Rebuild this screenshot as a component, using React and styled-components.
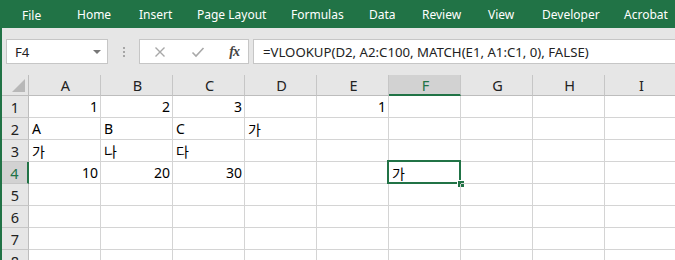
import React from 'react'
import styled, { createGlobalStyle } from 'styled-components'

const GlobalStyle = createGlobalStyle`
  html, body {
    margin: 0;
    padding: 0;
    background: #ffffff;
    overflow: hidden;
  }
`

const font = `"Noto Sans", "Noto Sans CJK KR", sans-serif`
const green = '#217346'

const Window = styled.div`
  width: 675px;
  height: 260px;
  border-left: 2px solid ${green};
  box-sizing: border-box;
  font-family: ${font};
  overflow: hidden;
  display: flex;
  flex-direction: column;
`

const Ribbon = styled.div`
  height: 28px;
  margin-left: -2px;
  background: ${green};
  display: flex;
  align-items: center;
  padding-left: 22px;
  flex-shrink: 0;
  overflow: hidden;
`

const Tab = styled.div`
  color: #ffffff;
  font-size: 12px;
  width: ${(p) => p.$w}px;
  flex-shrink: 0;
  white-space: nowrap;
  padding-top: ${(p) => (p.$file ? 3 : 0)}px;
`

const FormulaBar = styled.div`
  height: 47px;
  background: #e6e6e6;
  display: flex;
  align-items: center;
  padding: 0 0 0 4px;
  flex-shrink: 0;
`

const Box = styled.div`
  height: 25px;
  box-sizing: border-box;
  background: #ffffff;
  border: 1px solid #c6c6c6;
  display: flex;
  align-items: center;
  font-size: 13.2px;
  color: #222;
`

const NameBox = styled(Box)`
  width: 102px;
  padding: 0 6px 0 8px;
  justify-content: space-between;
`

const Caret = styled.span`
  width: 0;
  height: 0;
  border-left: 4px solid transparent;
  border-right: 4px solid transparent;
  border-top: 4px solid #777;
`

const Dots = styled.div`
  width: 31px;
  display: flex;
  flex-direction: column;
  align-items: center;
  gap: 2px;
  span {
    width: 2px;
    height: 2px;
    background: #a6a6a6;
  }
`

const FnBox = styled(Box)`
  width: 110px;
  padding: 0 9px 0 14px;
  justify-content: space-between;
`

const Fx = styled.span`
  font-family: "Liberation Serif", serif;
  font-style: italic;
  font-weight: bold;
  font-size: 14px;
  color: #444;
  letter-spacing: -1px;
`

const FormulaInput = styled(Box)`
  flex: 1;
  margin-left: 4px;
  border-right: none;
  padding-left: 9px;
  white-space: nowrap;
`

const Grid = styled.div`
  display: grid;
  grid-template-columns: 27px repeat(9, 72px);
  grid-template-rows: 21px repeat(8, 22px);
`

const Corner = styled.div`
  background: #e6e6e6;
  border-right: 1px solid #bdbdbd;
  border-bottom: 1px solid #bdbdbd;
  box-sizing: border-box;
  position: relative;
  &::after {
    content: '';
    position: absolute;
    right: 3px;
    bottom: 3px;
    width: 0;
    height: 0;
    border-left: 13px solid transparent;
    border-bottom: 13px solid #b8b8b8;
  }
`

const ColHead = styled.div`
  background: ${(p) => (p.$active ? '#d2d2d2' : '#e6e6e6')};
  color: ${(p) => (p.$active ? green : '#222')};
  border-right: 1px solid #c6c6c6;
  border-bottom: ${(p) => (p.$active ? `2px solid ${green}` : '1px solid #bdbdbd')};
  box-sizing: border-box;
  display: flex;
  align-items: center;
  justify-content: center;
  padding-left: 2px;
  font-size: 14.5px;
`

const RowHead = styled.div`
  background: ${(p) => (p.$active ? '#d2d2d2' : '#e6e6e6')};
  color: ${(p) => (p.$active ? green : '#222')};
  border-right: ${(p) => (p.$active ? `2px solid ${green}` : '1px solid #bdbdbd')};
  border-bottom: 1px solid #c6c6c6;
  box-sizing: border-box;
  display: flex;
  align-items: center;
  justify-content: center;
  font-size: 14.5px;
`

const Cell = styled.div`
  position: relative;
  border-right: 1px solid #d4d4d4;
  border-bottom: 1px solid #d4d4d4;
  box-sizing: border-box;
  display: flex;
  align-items: center;
  justify-content: ${(p) => (p.$num ? 'flex-end' : 'flex-start')};
  padding: 0 2px 0 3px;
  font-size: 14px;
  color: #000;
  white-space: nowrap;
  ${(p) =>
    p.$selected &&
    `
    &::before {
      content: '';
      position: absolute;
      left: -2px;
      top: -2px;
      right: -1px;
      bottom: -1px;
      border: 2px solid ${green};
      pointer-events: none;
    }
    &::after {
      content: '';
      position: absolute;
      right: -4px;
      bottom: -4px;
      width: 6px;
      height: 6px;
      background: ${green};
      border-left: 1px solid #fff;
      border-top: 1px solid #fff;
    }
  `}
`

const tabs = [
  ['File', 55, true],
  ['Home', 62],
  ['Insert', 58],
  ['Page Layout', 94],
  ['Formulas', 78],
  ['Data', 53],
  ['Review', 66],
  ['View', 54],
  ['Developer', 82],
  ['Acrobat', 60]
]

const cols = ['A', 'B', 'C', 'D', 'E', 'F', 'G', 'H', 'I']

const data = {
  1: { A: 1, B: 2, C: 3, E: 1 },
  2: { A: 'A', B: 'B', C: 'C', D: '가' },
  3: { A: '가', B: '나', C: '다' },
  4: { A: 10, B: 20, C: 30, F: '가' }
}

function App() {
  const rows = [1, 2, 3, 4, 5, 6, 7, 8]
  return (
    <Window>
      <GlobalStyle />
      <Ribbon>
        {tabs.map(([t, w, f]) => (
          <Tab key={t} $w={w} $file={f}>
            {t}
          </Tab>
        ))}
      </Ribbon>
      <FormulaBar>
        <NameBox>
          F4
          <Caret />
        </NameBox>
        <Dots>
          <span />
          <span />
          <span />
        </Dots>
        <FnBox>
          <svg width="12" height="12" viewBox="0 0 12 12">
            <path d="M1.5 1.5 L10.5 10.5 M10.5 1.5 L1.5 10.5" stroke="#a8a8a8" strokeWidth="1.4" fill="none" />
          </svg>
          <svg width="14" height="12" viewBox="0 0 14 12">
            <path d="M1.5 6.5 L5 10 L12.5 2" stroke="#a8a8a8" strokeWidth="1.6" fill="none" />
          </svg>
          <Fx>fx</Fx>
        </FnBox>
        <FormulaInput>=VLOOKUP(D2, A2:C100, MATCH(E1, A1:C1, 0), FALSE)</FormulaInput>
      </FormulaBar>
      <Grid>
        <Corner />
        {cols.map((c) => (
          <ColHead key={c} $active={c === 'F'}>
            {c}
          </ColHead>
        ))}
        {rows.map((r) => (
          <React.Fragment key={r}>
            <RowHead $active={r === 4}>{r}</RowHead>
            {cols.map((c) => {
              const v = data[r] && data[r][c]
              return (
                <Cell key={c} $num={typeof v === 'number'} $selected={r === 4 && c === 'F'}>
                  {v}
                </Cell>
              )
            })}
          </React.Fragment>
        ))}
      </Grid>
    </Window>
  )
}

export default App
